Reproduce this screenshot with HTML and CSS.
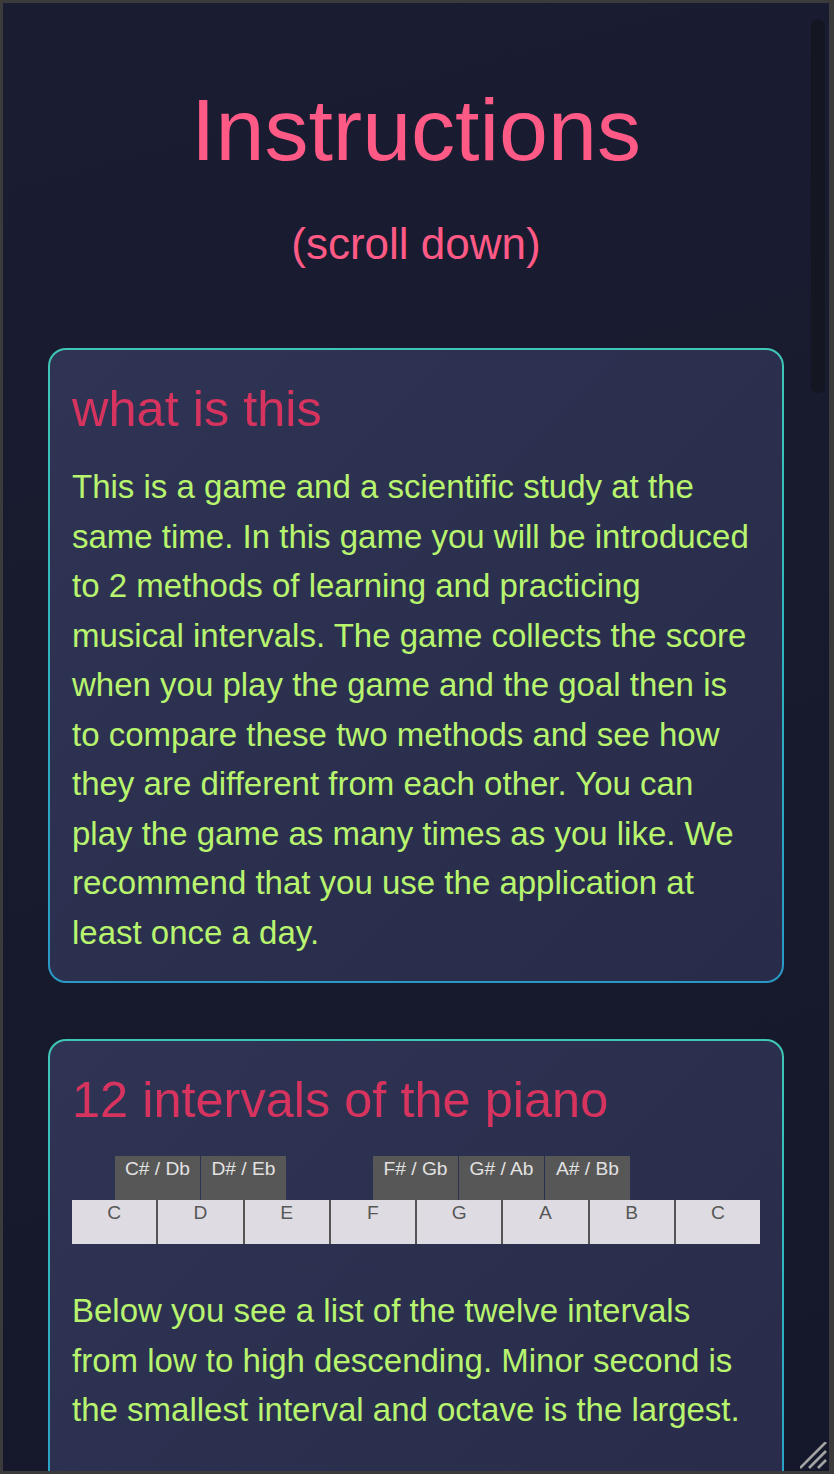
FILE: index.html
```html
<!DOCTYPE html>
<html lang="en">
<head>
<meta charset="utf-8">
<title>Instructions</title>
<link rel="stylesheet" href="styles.css">
</head>
<body>
<div class="window">
  <main class="page">
    <header class="intro">
      <h1 class="title">Instructions</h1>
      <p class="subtitle">(scroll down)</p>
    </header>

    <section class="card">
      <h2 class="card-title">what is this</h2>
      <p class="card-text">This is a game and a scientific study at the same time. In this game you will be introduced to 2 methods of learning and practicing musical intervals. The game collects the score when you play the game and the goal then is to compare these two methods and see how they are different from each other. You can play the game as many times as you like. We recommend that you use the application at least once a day.</p>
    </section>

    <section class="card card--long">
      <h2 class="card-title">12 intervals of the piano</h2>
      <div class="piano">
        <div class="black-row">
          <div class="black-key">C# / Db</div>
          <div class="black-key">D# / Eb</div>
          <div class="black-key black-key--empty"></div>
          <div class="black-key">F# / Gb</div>
          <div class="black-key">G# / Ab</div>
          <div class="black-key">A# / Bb</div>
        </div>
        <div class="white-row">
          <div class="white-key">C</div>
          <div class="white-key">D</div>
          <div class="white-key">E</div>
          <div class="white-key">F</div>
          <div class="white-key">G</div>
          <div class="white-key">A</div>
          <div class="white-key">B</div>
          <div class="white-key">C</div>
        </div>
      </div>
      <p class="card-text card-text--spaced">Below you see a list of the twelve intervals from low to high descending. Minor second is the smallest interval and octave is the largest.</p>
    </section>
  </main>
  <div class="scroll-thumb"></div>
  <svg class="grip" width="28" height="28" viewBox="0 0 28 28" aria-hidden="true">
    <line x1="0" y1="26" x2="26" y2="0" />
    <line x1="9" y1="26" x2="26" y2="9" />
    <line x1="18" y1="26" x2="26" y2="18" />
  </svg>
</div>
</body>
</html>
```

FILE: styles.css
```css
html, body {
  margin: 0;
  padding: 0;
  height: 100%;
  background: #2b2b2b;
}

.window {
  position: relative;
  box-sizing: border-box;
  height: 100vh;
  border-style: solid;
  border-color: #3b3b3b;
  border-width: 3px 5px 3px 3px;
  overflow: hidden;
  background: linear-gradient(165deg, #1a1d32 0%, #181b2e 45%, #15182a 100%);
  font-family: "Liberation Sans", Arial, Helvetica, sans-serif;
}

.page {
  padding: 0 45px;
}

.intro {
  text-align: center;
  padding-top: 76px;
  margin-bottom: 79px;
}

.title {
  margin: 0;
  font-size: 88px;
  font-weight: 400;
  color: #ff5a86;
  line-height: normal;
}

.subtitle {
  margin: 38px 0 0;
  font-size: 44px;
  color: #ff5a86;
  line-height: normal;
}

.card {
  border: 2px solid transparent;
  border-radius: 18px;
  background:
    linear-gradient(135deg, #2f3454 0%, #2b2f4e 60%, #282b49 100%) padding-box,
    linear-gradient(180deg, #3fc7b6 0%, #2fb3c0 50%, #2a98c6 100%) border-box;
  padding: 30px 22px 24px;
  margin-bottom: 56px;
}

.card--long {
  padding-bottom: 120px;
}

.card-title {
  margin: 0;
  font-size: 50.5px;
  font-weight: 400;
  color: #d6345f;
  line-height: 58px;
}

.card-text {
  margin: 24px 0 0;
  font-size: 33px;
  line-height: 1.5;
  color: #b8f46e;
}

.card-text--spaced {
  margin-top: 42px;
}

.piano {
  margin-top: 27px;
  font-size: 19.2px;
}

.black-row {
  display: flex;
  gap: 1px;
  padding-left: 43px;
  height: 44px;
}

.black-key {
  width: 85px;
  box-sizing: border-box;
  background: #575757;
  color: #e2e2e2;
  text-align: center;
  padding-top: 2px;
}

.black-key--empty {
  background: transparent;
}

.white-row {
  display: flex;
  gap: 2px;
  background: #555555;
  height: 44px;
}

.white-key {
  flex: 1;
  background: #dedce2;
  color: #575757;
  text-align: center;
  padding-top: 2px;
}

.scroll-thumb {
  position: absolute;
  top: 16px;
  right: 4px;
  width: 14px;
  height: 374px;
  border-radius: 7px;
  background: #141622;
}

.grip {
  position: absolute;
  right: 1px;
  bottom: 1px;
}

.grip line {
  stroke: #a3a3a3;
  stroke-width: 2.6;
}
```
